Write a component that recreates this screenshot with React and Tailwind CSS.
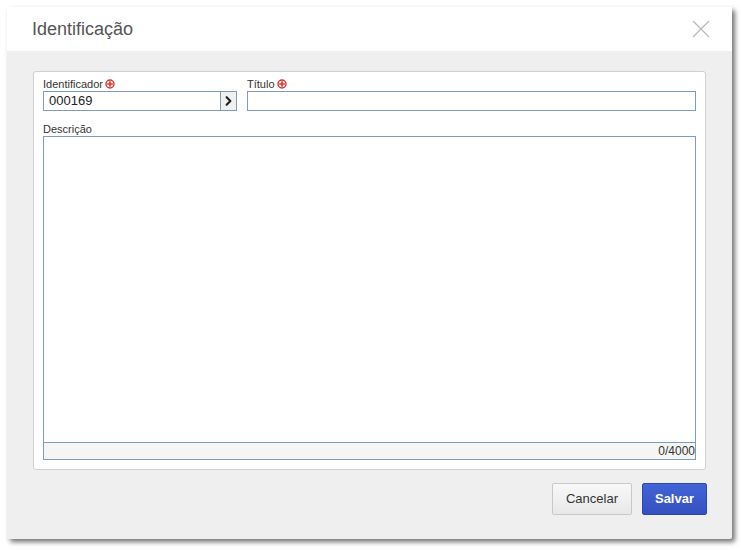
import { ChevronRight } from "lucide-react";

function Required() {
  return (
    <svg width="10" height="10" viewBox="0 0 10 10" className="ml-[2px] inline-block">
      <circle cx="5" cy="5" r="4" fill="none" stroke="#e8302a" strokeWidth="1.4" />
      <path d="M5 2.2v5.6M2.2 5h5.6" stroke="#e8302a" strokeWidth="1.6" />
    </svg>
  );
}

function Label({ children, required }) {
  return (
    <div className="flex h-[12px] items-center text-[11px] leading-none text-[#333]">
      <span>{children}</span>
      {required ? <Required /> : null}
    </div>
  );
}

export default function App() {
  return (
    <div className="h-[550px] w-[742px] bg-white pl-[7px] pt-[7px] font-['Liberation_Sans',Arial,sans-serif]">
      <div className="flex h-[532px] w-[725px] flex-col rounded-[2px] bg-[#efefef] shadow-[3px_3px_5px_rgba(0,0,0,0.55)]">
        <div className="flex h-[44px] items-center justify-between bg-white pl-[25px] pr-[22px]">
          <h1 className="text-[18px] text-[#555]">Identificação</h1>
          <svg width="18" height="18" viewBox="0 0 18 18">
            <path d="M1 1L17 17M17 1L1 17" stroke="#b8b8b8" strokeWidth="1.2" />
          </svg>
        </div>

        <div className="flex flex-1 flex-col px-[26px] pt-[20px] pb-[24px]">
          <div className="flex h-[399px] flex-col rounded-[3px] border border-[#d0d0d0] bg-white px-[9px] pt-[6px] pb-[9px]">
            <div className="flex gap-[10px]">
              <div className="flex w-[194px] flex-col gap-[1px]">
                <Label required>Identificador</Label>
                <div className="flex h-[20px] border border-[#7f9db9]">
                  <div className="flex flex-1 items-center pl-[5px] text-[13px] text-[#222]">000169</div>
                  <div className="flex w-[16px] items-center justify-center border-l border-[#7f9db9] bg-[#f0f0f0]">
                    <ChevronRight size={16} strokeWidth={3.4} color="#222" />
                  </div>
                </div>
              </div>
              <div className="flex flex-1 flex-col gap-[1px]">
                <Label required>Título</Label>
                <div className="h-[20px] border border-[#7f9db9]" />
              </div>
            </div>

            <div className="mt-[12px] flex flex-1 flex-col gap-[1px]">
              <Label>Descrição</Label>
              <div className="flex flex-1 flex-col border border-[#7f9db9]">
                <div className="flex-1 bg-white" />
                <div className="flex h-[17px] items-center justify-end border-t border-[#7f9db9] bg-[#f5f6f3] text-[12px] text-[#333]">
                  0/4000
                </div>
              </div>
            </div>
          </div>

          <div className="mt-[13px] flex justify-end gap-[10px]">
            <button className="h-[32px] w-[80px] rounded-[2px] border border-[#c8c8c8] bg-gradient-to-b from-[#f8f8f8] to-[#e8e8e8] text-[13px] text-[#333]">
              Cancelar
            </button>
            <button className="-mr-[1px] h-[32px] w-[65px] rounded-[2px] border border-[#2b48b0] bg-gradient-to-b from-[#4264d6] to-[#3550c0] text-[13px] font-bold text-white">
              Salvar
            </button>
          </div>
        </div>
      </div>
    </div>
  );
}
